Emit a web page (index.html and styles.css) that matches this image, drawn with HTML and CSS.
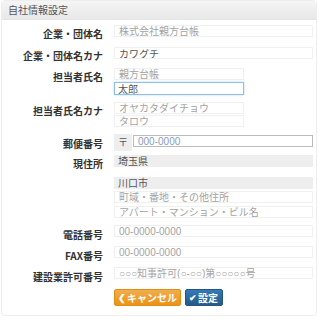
FILE: index.html
```html
<!DOCTYPE html>
<html lang="ja">
<head>
  <meta charset="UTF-8" />
  <meta name="viewport" content="width=device-width, initial-scale=1.0" />
  <title>自社情報設定</title>
  <link rel="stylesheet" href="styles.css">
</head>
<body>
  <div class="panel">
    <div class="panel-heading">自社情報設定</div>
    <form class="panel-body">
      <div class="group g1">
        <label>企業・団体名</label>
        <div class="controls">
          <input type="text" placeholder="株式会社親方台帳">
        </div>
      </div>
      <div class="group g2">
        <label>企業・団体名カナ</label>
        <div class="controls">
          <input type="text" value="カワグチ">
        </div>
      </div>
      <div class="group g3">
        <label>担当者氏名</label>
        <div class="controls">
          <input type="text" class="short" placeholder="親方台帳">
          <input type="text" class="short focus" value="太郎">
        </div>
      </div>
      <div class="group g4">
        <label>担当者氏名カナ</label>
        <div class="controls tight">
          <input type="text" class="short" placeholder="オヤカタダイチョウ">
          <input type="text" class="short" placeholder="タロウ">
        </div>
      </div>
      <div class="group g5">
        <label>郵便番号</label>
        <div class="controls">
          <div class="zip">
            <span class="addon">〒</span>
            <input type="text" class="zip-input" placeholder="000-0000">
          </div>
        </div>
      </div>
      <div class="group g6">
        <label>現住所</label>
        <div class="controls">
          <div class="select">埼玉県</div>
          <div class="select second">川口市</div>
          <input type="text" placeholder="町域・番地・その他住所">
          <input type="text" class="last" placeholder="アパート・マンション・ビル名">
        </div>
      </div>
      <div class="group g7">
        <label>電話番号</label>
        <div class="controls">
          <input type="text" placeholder="00-0000-0000">
        </div>
      </div>
      <div class="group g8">
        <label>FAX番号</label>
        <div class="controls">
          <input type="text" placeholder="00-0000-0000">
        </div>
      </div>
      <div class="group g9">
        <label>建設業許可番号</label>
        <div class="controls">
          <input type="text" placeholder="○○○知事許可(○-○○)第○○○○○号">
        </div>
      </div>
      <div class="buttons">
        <button type="button" class="btn btn-cancel"><span class="ico">❮</span>キャンセル</button>
        <button type="button" class="btn btn-save"><span class="ico">✔</span>設定</button>
      </div>
    </form>
  </div>
</body>
</html>
```
FILE: styles.css
```css
body {
  margin: 0;
  font-family: "Noto Sans CJK JP", "Liberation Sans", sans-serif;
  font-size: 10px;
  color: #333;
  background: #fff;
}
.panel {
  margin: 0 2px 0 1px;
  height: 316px;
  border: 1px solid #eee;
  border-radius: 4px;
  box-sizing: border-box;
  overflow: hidden;
}
.panel-heading {
  height: 19px;
  line-height: 18px;
  padding-left: 6px;
  color: #555;
  background: linear-gradient(#f5f5f5, #e8e8e8);
  border-bottom: 1px solid #e4e4e4;
  box-sizing: border-box;
}
.panel-body {
  padding-top: 5px;
}
.group {
  display: flex;
  align-items: flex-start;
}
.group label {
  width: 101px;
  text-align: right;
  font-weight: bold;
  line-height: 12px;
  padding-top: 3px;
  margin-bottom: -3px;
  margin-right: 11px;
  color: #333;
}
.controls {
  display: flex;
  flex-direction: column;
  gap: 2px;
  width: 199px;
}
.controls.tight {
  gap: 1px;
}
input {
  display: block;
  box-sizing: border-box;
  width: 199px;
  height: 12px;
  margin: 0;
  padding: 0 4px;
  border: 1px solid #f0f0f0;
  font-family: "Liberation Sans", "Noto Sans CJK JP", sans-serif;
  font-size: 10px;
  line-height: 10px;
  color: #555;
  background: #fff;
  outline: none;
}
input::placeholder {
  color: #a3a3a3;
}
input.short {
  width: 130px;
}
input.focus {
  height: 13px;
  border-color: #8fbfe6;
  box-shadow: 0 0 2px rgba(102, 175, 233, 0.5);
  padding-left: 3px;
}
.g2 { margin-top: 10px; }
.g3 { margin-top: 9px; }
.g4 { margin-top: 7px; }
.g5 { margin-top: 7px; }
.g6 { margin-top: 4px; }
.g7 { margin-top: 7px; }
.g8 { margin-top: 8px; }
.g9 { margin-top: 8px; }
.g5 label {
  padding-top: 4px;
}
.g7 label, .g8 label, .g9 label {
  padding-top: 4px;
}
.zip {
  display: flex;
  align-items: flex-start;
}
.addon {
  width: 18px;
  height: 17px;
  line-height: 16px;
  text-align: center;
  background: #eee;
  color: #555;
  margin-right: 1px;
}
.zip-input {
  width: 180px;
  margin-top: 1px;
  border-color: #bbb;
}
.zip-input::placeholder {
  color: #8c9cba;
}
.select {
  height: 12px;
  line-height: 11px;
  padding-left: 4px;
  background: #eee;
  color: #555;
}
.select.second {
  margin-top: 8px;
}
.controls input.last {
  margin-top: 1px;
}
.buttons {
  display: flex;
  gap: 4px;
  margin: 9px 0 0 112px;
}
.btn {
  height: 17px;
  padding: 0 3px;
  border: 1px solid transparent;
  border-radius: 2px;
  font-family: inherit;
  font-size: 10px;
  font-weight: bold;
  color: #fff;
  line-height: 14px;
  display: flex;
  align-items: center;
}
.btn .ico {
  font-size: 9px;
  margin-right: 1px;
}
.btn-cancel {
  width: 67px;
  background: linear-gradient(#f0ad4e, #eb9316);
  border-color: #e38d13;
}
.btn-save {
  width: 38px;
  background: linear-gradient(#337ab7, #265a88);
  border-color: #245580;
}
```
